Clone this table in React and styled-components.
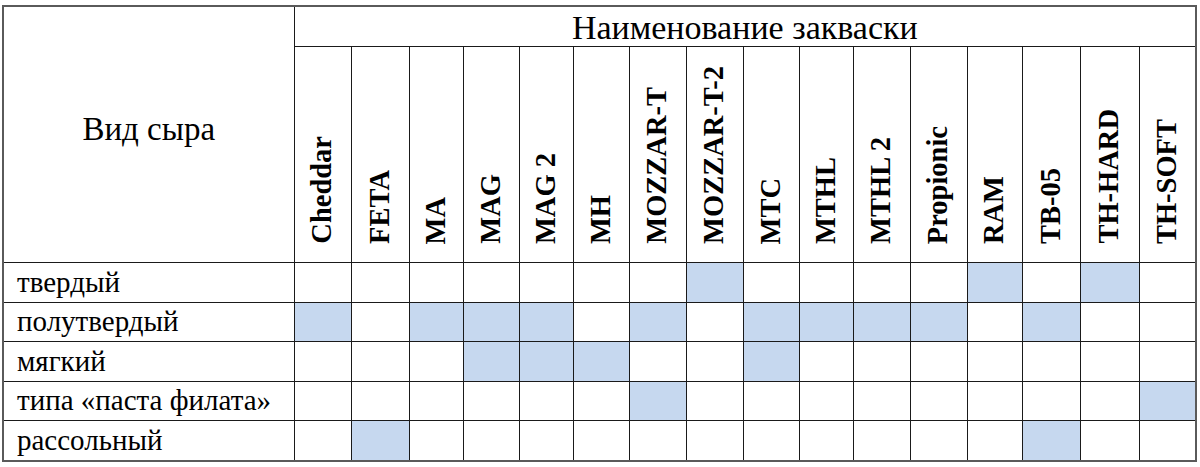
import { createGlobalStyle, styled } from "styled-components";

const SERIF = `"Liberation Serif", "Times New Roman", serif`;

const GlobalStyle = createGlobalStyle`
    body {
        margin: 0;
        background: #ffffff;
        font-family: ${SERIF};
        color: #000;
    }
`;

const STARTERS = [
    { name: 'Cheddar', width: 57 },
    { name: 'FETA', width: 58 },
    { name: 'MA', width: 54 },
    { name: 'MAG', width: 56 },
    { name: 'MAG 2', width: 54 },
    { name: 'MH', width: 56 },
    { name: 'MOZZAR-T', width: 57 },
    { name: 'MOZZAR-T-2', width: 57 },
    { name: 'MTC', width: 56 },
    { name: 'MTHL', width: 54 },
    { name: 'MTHL 2', width: 57 },
    { name: 'Propionic', width: 57 },
    { name: 'RAM', width: 55 },
    { name: 'TB-05', width: 58 },
    { name: 'TH-HARD', width: 59 },
    { name: 'TH-SOFT', width: 57 },
];

// какие закваски подходят к какому виду сыра
const ROWS = [
    { label: 'твердый', marked: ['MOZZAR-T-2', 'RAM', 'TH-HARD'] },
    {
        label: 'полутвердый',
        marked: ['Cheddar', 'MA', 'MAG', 'MAG 2', 'MOZZAR-T', 'MTC', 'MTHL', 'MTHL 2', 'Propionic', 'TB-05'],
    },
    { label: 'мягкий', marked: ['MAG', 'MAG 2', 'MH', 'MTC'] },
    { label: 'типа «паста филата»', marked: ['MOZZAR-T', 'TH-SOFT'] },
    { label: 'рассольный', marked: ['FETA', 'TB-05'] },
];

const App = () => {
    return (
        <Page>
            <GlobalStyle />
            <Table>
                <colgroup>
                    <Col $width={291} />
                    {STARTERS.map(s => (
                        <Col key={s.name} $width={s.width} />
                    ))}
                </colgroup>
                <thead>
                    <tr>
                        <CornerCell rowSpan={2}>Вид сыра</CornerCell>
                        <TitleCell colSpan={STARTERS.length}>Наименование закваски</TitleCell>
                    </tr>
                    <tr>
                        {STARTERS.map(s => (
                            <StarterCell key={s.name}>
                                <Vertical>{s.name}</Vertical>
                            </StarterCell>
                        ))}
                    </tr>
                </thead>
                <tbody>
                    {ROWS.map(r => (
                        <tr key={r.label}>
                            <RowLabel>{r.label}</RowLabel>
                            {STARTERS.map(s => (
                                <Cell key={s.name} $filled={r.marked.includes(s.name)} />
                            ))}
                        </tr>
                    ))}
                </tbody>
            </Table>
        </Page>
    );
};

export default App;

const Page = styled.div`
    padding: 5px 0 0 2px;
`;

const Table = styled.table`
    border-collapse: collapse;
    table-layout: fixed;
    width: 1194px;
    border: 2px solid #5a5a5a;
    font-family: ${SERIF};
`;

const Col = styled.col`
    width: ${p => p.$width}px;
`;

const BaseCell = styled.td`
    border: 1px solid #1a1a1a;
    padding: 0;
    font-family: ${SERIF};
    color: #000;
`;

const CornerCell = styled(BaseCell).attrs({ as: 'th' })`
    font-weight: normal;
    font-size: 33px;
    text-align: center;
    vertical-align: middle;
    padding-bottom: 10px;
`;

const TitleCell = styled(BaseCell).attrs({ as: 'th' })`
    height: 37px;
    font-weight: normal;
    font-size: 34px;
    text-align: center;
    vertical-align: middle;
    line-height: 1;
    padding-top: 2px;
`;

const StarterCell = styled(BaseCell).attrs({ as: 'th' })`
    height: 201px;
    vertical-align: bottom;
    text-align: center;
    padding-bottom: 14px;
`;

const Vertical = styled.span`
    display: inline-block;
    writing-mode: vertical-rl;
    transform: rotate(180deg);
    font-family: ${SERIF};
    font-size: 28.5px;
    font-weight: bold;
    line-height: 1;
    white-space: nowrap;
`;

const RowLabel = styled(BaseCell)`
    height: 38.5px;
    font-size: 29px;
    line-height: 1;
    padding-left: 13px;
    vertical-align: middle;
    white-space: nowrap;
`;

const Cell = styled(BaseCell)`
    background: ${p => (p.$filled ? '#c6d8ef' : '#ffffff')};
`;
